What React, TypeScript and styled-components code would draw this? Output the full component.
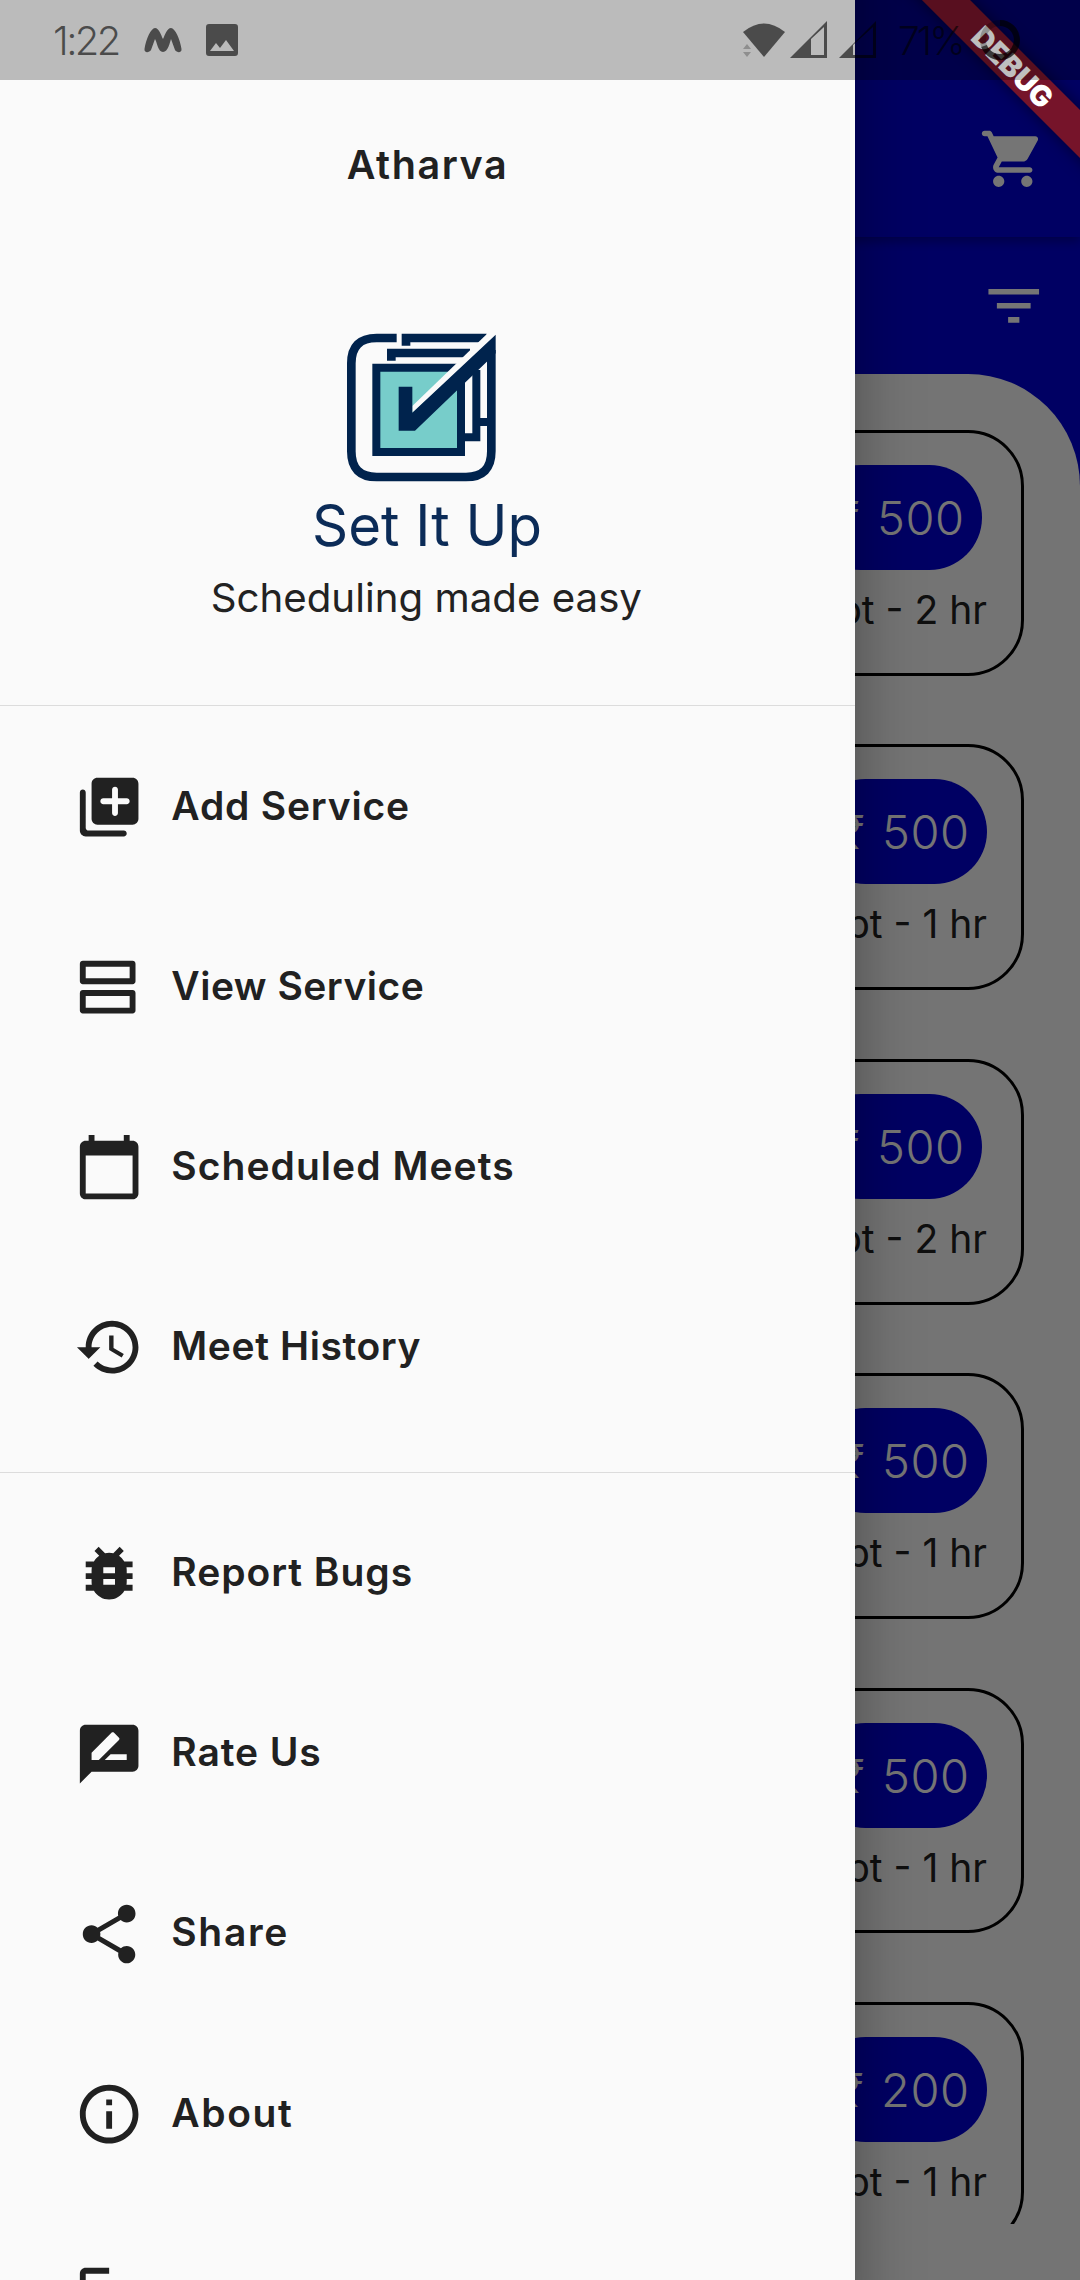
import React from "react";
import styled, { createGlobalStyle } from "styled-components";
import { MdBugReport, MdCalendarToday, MdFilterList, MdShare } from "react-icons/md";

const Global = createGlobalStyle`
  body { margin: 0; background: #fafafa; }
  * { box-sizing: border-box; }
`;

const sans = `Inter, "Noto Sans", sans-serif`;
const BLUE = "#0000d8";

const Screen = styled.div`
  position: relative;
  width: 1080px;
  height: 2280px;
  overflow: hidden;
  background: #fafafa;
  font-family: ${sans};
`;

const Page = styled.div`
  display: flex;
  flex-direction: column;
  height: 2280px;
  background: ${BLUE};
`;

const AppBar = styled.header`
  display: flex;
  flex: none;
  align-items: center;
  justify-content: flex-end;
  height: 237px;
  padding: 80px 34px 0 0;
  color: #fff;
  box-shadow: 0 4px 10px rgba(0, 0, 0, 0.3);
`;

const Toolbar = styled.div`
  display: flex;
  flex: none;
  align-items: center;
  justify-content: flex-end;
  height: 137px;
  padding-right: 33px;
  color: #fff;
`;

const Panel = styled.main`
  flex: 1;
  min-height: 0;
  padding: 56px 56px;
  border-radius: 112px 112px 0 0;
  background: #fdfdfd;
`;

const List = styled.div`
  display: flex;
  flex-direction: column;
  gap: 68.5px;
  height: 1794px;
  overflow: hidden;
`;

const Card = styled.article`
  display: flex;
  flex: none;
  justify-content: flex-end;
  height: 245.9px;
  padding: 32px 34px 0 0;
  border: 3px solid #000;
  border-radius: 56px;
`;

const Offer = styled.div<{ $width: number }>`
  display: flex;
  flex-direction: column;
  align-items: center;
  width: ${(p) => p.$width}px;
`;

const Price = styled.div`
  display: flex;
  flex: none;
  align-items: center;
  justify-content: flex-end;
  width: 174px;
  height: 105px;
  padding-right: 17px;
  border-radius: 53px;
  background: ${BLUE};
  color: #fff;
  font-size: 47px;
  font-weight: 300;
  letter-spacing: 0.5px;
  word-spacing: 3.5px;
  white-space: nowrap;
`;

const Duration = styled.div`
  align-self: flex-end;
  margin-top: 15px;
  color: #212121;
  font-size: 39px;
  line-height: 50px;
  white-space: nowrap;
`;

const Scrim = styled.div`
  position: absolute;
  inset: 0;
  background: rgba(0, 0, 0, 0.54);
`;

const Drawer = styled.aside`
  position: absolute;
  inset: -60px auto -60px 0;
  display: flex;
  flex-direction: column;
  width: 855px;
  padding-top: 140px;
  background: #fafafa;
  color: #212121;
  box-shadow: 0 0 60px rgba(0, 0, 0, 0.34);
`;

const Profile = styled.div`
  display: flex;
  flex: none;
  flex-direction: column;
  align-items: center;
  height: 625px;
  padding-top: 60px;
`;

const Name = styled.h1`
  margin: 0;
  font-size: 39.5px;
  font-weight: 600;
  line-height: 50px;
  letter-spacing: 1.6px;
`;

const Logo = styled.svg`
  width: 480px;
  height: 330px;
  margin: 120px 0 0 5px;
`;

const Group = styled.nav`
  display: flex;
  flex: none;
  flex-direction: column;
  padding: 11px 0 34px;
  border-top: 1px solid #dcdcdc;
`;

const Row = styled.a`
  display: flex;
  align-items: center;
  gap: 27px;
  height: 180.15px;
  padding-left: 74px;
`;

const Label = styled.span<{ $track: number }>`
  margin-top: -4px;
  font-size: 39px;
  font-weight: 600;
  letter-spacing: ${(p) => p.$track}px;
  white-space: nowrap;
`;

const StatusBar = styled.div`
  position: absolute;
  inset: 0 0 auto 0;
  display: flex;
  align-items: center;
  height: 80px;
  padding-left: 53px;
  background: rgba(0, 0, 0, 0.25);
  color: rgba(0, 0, 0, 0.6);
`;

const Clock = styled.span`
  width: 90px;
  font-size: 40px;
  font-weight: 300;
  letter-spacing: -2.6px;
`;

const Battery = styled.span`
  width: 80px;
  margin-left: 13px;
  font-size: 39px;
  font-weight: 300;
  letter-spacing: -3px;
`;

const Ribbon = styled.div`
  position: absolute;
  top: 49.5px;
  right: -92.5px;
  display: flex;
  align-items: center;
  justify-content: center;
  width: 320px;
  height: 34px;
  transform: rotate(45deg);
  background: #76142a;
  box-shadow: 0 0 16px rgba(0, 0, 0, 0.5);
  color: #fff;
  font-size: 29px;
  font-weight: 900;
`;

const Glyph = ({ d, size = 70.3 }: { d: string; size?: number }) => (
  <svg width={size} height={size} viewBox="0 0 24 24" fill="currentColor">
    <path d={d} />
  </svg>
);

const cart =
  "M7 18c-1.1 0-1.99.9-1.99 2S5.9 22 7 22s2-.9 2-2-.9-2-2-2zM1 3c0 .55.45 1 1 1h1l3.6 7.59-1.35 2.44C4.52 15.37 5.48 17 7 17h11c.55 0 1-.45 1-1s-.45-1-1-1H7l1.1-2h7.45c.75 0 1.41-.41 1.75-1.03l3.58-6.49c.37-.66-.11-1.48-.87-1.48H5.21l-.67-1.43c-.16-.35-.52-.57-.9-.57H2c-.55 0-1 .45-1 1zm16 15c-1.1 0-1.99.9-1.99 2s.89 2 1.99 2 2-.9 2-2-.9-2-2-2z";
const libraryAdd =
  "M3 6c-.55 0-1 .45-1 1v13c0 1.1.9 2 2 2h13c.55 0 1-.45 1-1s-.45-1-1-1H5c-.55 0-1-.45-1-1V7c0-.55-.45-1-1-1zm17-4H8c-1.1 0-2 .9-2 2v12c0 1.1.9 2 2 2h12c1.1 0 2-.9 2-2V4c0-1.1-.9-2-2-2zm-2 9h-3v3c0 .55-.45 1-1 1s-1-.45-1-1v-3h-3c-.55 0-1-.45-1-1s.45-1 1-1h3V6c0-.55.45-1 1-1s1 .45 1 1v3h3c.55 0 1 .45 1 1s-.45 1-1 1z";
const agenda =
  "M20 3H3c-.55 0-1 .45-1 1v6c0 .55.45 1 1 1h17c.55 0 1-.45 1-1V4c0-.55-.45-1-1-1zm-1 6H4V5h15v4zM20 13H3c-.55 0-1 .45-1 1v6c0 .55.45 1 1 1h17c.55 0 1-.45 1-1v-6c0-.55-.45-1-1-1zm-1 6H4v-4h15v4z";
const history =
  "M13 3c-4.97 0-9 4.03-9 9H1l3.89 3.89.07.14L9 12H6c0-3.87 3.13-7 7-7s7 3.13 7 7-3.13 7-7 7c-1.93 0-3.68-.79-4.94-2.06l-1.42 1.42C8.27 19.99 10.51 21 13 21c4.97 0 9-4.03 9-9s-4.03-9-9-9zm-1 5v5l4.28 2.54.72-1.21-3.5-2.08V8H12z";
const rate =
  "M20 2H4c-1.1 0-1.99.9-1.99 2L2 22l4-4h14c1.1 0 2-.9 2-2V4c0-1.1-.9-2-2-2zM6 14v-2.47l6.88-6.88c.2-.2.51-.2.71 0l1.77 1.77c.2.2.2.51 0 .71L8.47 14H6zm12 0h-7.5l2-2H18v2z";
const info =
  "M11 7h2v2h-2zm0 4h2v6h-2zm1-9C6.48 2 2 6.48 2 12s4.48 10 10 10 10-4.48 10-10S17.52 2 12 2zm0 18c-4.41 0-8-3.59-8-8s3.59-8 8-8 8 3.59 8 8-3.59 8-8 8z";
const logout = "M4 5h8V3H4c-1.1 0-2 .9-2 2v14c0 1.1.9 2 2 2h8v-2H4V5z";

const main = [
  { icon: <Glyph d={libraryAdd} />, label: "Add Service", track: 0.8 },
  { icon: <Glyph d={agenda} />, label: "View Service", track: 0.5 },
  { icon: <MdCalendarToday size={70.3} />, label: "Scheduled Meets", track: 1.05 },
  { icon: <Glyph d={history} />, label: "Meet History", track: 0.6 },
];
const more = [
  { icon: <MdBugReport size={70.3} />, label: "Report Bugs", track: 0.95 },
  { icon: <Glyph d={rate} />, label: "Rate Us", track: 0.9 },
  { icon: <MdShare size={70.3} />, label: "Share", track: 1.7 },
  { icon: <Glyph d={info} />, label: "About", track: 1.6 },
  { icon: <Glyph d={logout} />, label: "", track: 0 },
];
const services = [
  { price: 500, hours: 2 },
  { price: 500, hours: 1 },
  { price: 500, hours: 2 },
  { price: 500, hours: 1 },
  { price: 500, hours: 1 },
  { price: 200, hours: 1 },
];

const BrandLogo = () => (
  <Logo viewBox="0 0 1440 990">
    <g fill="none" stroke="#00234d" strokeWidth="26">
      <path d="M620 84H560Q484 84 484 160V424Q484 501 560 501H828Q904 501 904 424V120" />
      <path d="M648 107V84H890" />
      <path d="M604 152V129H840" />
      <path d="M559 173H813V426H559Z" fill="#77cdca" strokeWidth="24" />
      <path d="M859 180V382H820M870 336H900" strokeWidth="24" />
    </g>
    <path d="M667 288L893 70L916 66V80L667 308Z" fill="#fafafa" />
    <path d="M626 230H667V308L917 74V130L675 362H626Z" fill="#00234d" />
    <text x="366" y="707" fontFamily="Inter, sans-serif" fontSize="172" fontWeight="400" fill="#0b2b57" textLength="690" lengthAdjust="spacingAndGlyphs">
      Set It Up
    </text>
    <text x="62" y="906" fontFamily="Inter, sans-serif" fontSize="120" fontWeight="400" fill="#222" textLength="1294" lengthAdjust="spacingAndGlyphs">
      Scheduling made easy
    </text>
  </Logo>
);

const StatusIcons = styled.svg`
  flex: none;
`;

export default function App() {
  return (
    <Screen>
      <Global />
      <Page>
        <AppBar>
          <Glyph d={cart} size={67.5} />
        </AppBar>
        <Toolbar>
          <MdFilterList size={67.5} />
        </Toolbar>
        <Panel>
          <List>
            {services.map((s, i) => (
              <Card key={i}>
                <Offer $width={s.hours === 2 ? 185 : 175}>
                  <Price>₹ {s.price}</Price>
                  <Duration>Appt - {s.hours} hr</Duration>
                </Offer>
              </Card>
            ))}
          </List>
        </Panel>
      </Page>
      <Scrim />
      <Drawer>
        <Profile>
          <Name>Atharva</Name>
          <BrandLogo />
        </Profile>
        {[main, more].map((items, g) => (
          <Group key={g}>
            {items.map((item, i) => (
              <Row key={i}>
                {item.icon}
                <Label $track={item.track}>{item.label}</Label>
              </Row>
            ))}
          </Group>
        ))}
      </Drawer>
      <Ribbon>DEBUG</Ribbon>
      <StatusBar>
        <Clock>1:22</Clock>
        <StatusIcons width="600" height="80" viewBox="143 0 600 80" fill="currentColor">
          <path d="M144.500 49C146 39 151 28 155 28C159 28 161 35 163 39C165 35 167 28 171 28C175 28 180 39 181.500 49C182 53 177 53 175 50L171 39C170 42 168 52 163 52C158 52 157 42 155 39L151 50C149 53 144 53 144.500 49Z" />
          <path d="M209 24h26q3 0 3 3v26q0 3-3 3h-26q-3 0-3-3v-26q0-3 3-3zM210 51h24l-8-11-6 8-4-5z" fillRule="evenodd" />
        </StatusIcons>
        <StatusIcons width="142" height="80" viewBox="743 0 142 80" fill="currentColor">
          <path d="M743 32Q764 15 785 32L764 57Z" />
          <path d="M743 49l4-5 4 5zM743 52l4 5 4-5z" opacity=".4" />
          <path d="M790 58L827 21V58ZM811 39V55H824V27Z" fillRule="evenodd" />
          <path d="M839 58L876 21V58ZM853 45V55H873V27Z" fillRule="evenodd" />
        </StatusIcons>
        <Battery>71%</Battery>
        <StatusIcons width="46" height="80" viewBox="976 0 46 80" fill="none" stroke="currentColor" strokeWidth="6">
          <circle cx="998" cy="40" r="17" opacity=".4" />
          <path d="M998 23A17 17 0 1 1 982 46" />
        </StatusIcons>
      </StatusBar>
    </Screen>
  );
}
